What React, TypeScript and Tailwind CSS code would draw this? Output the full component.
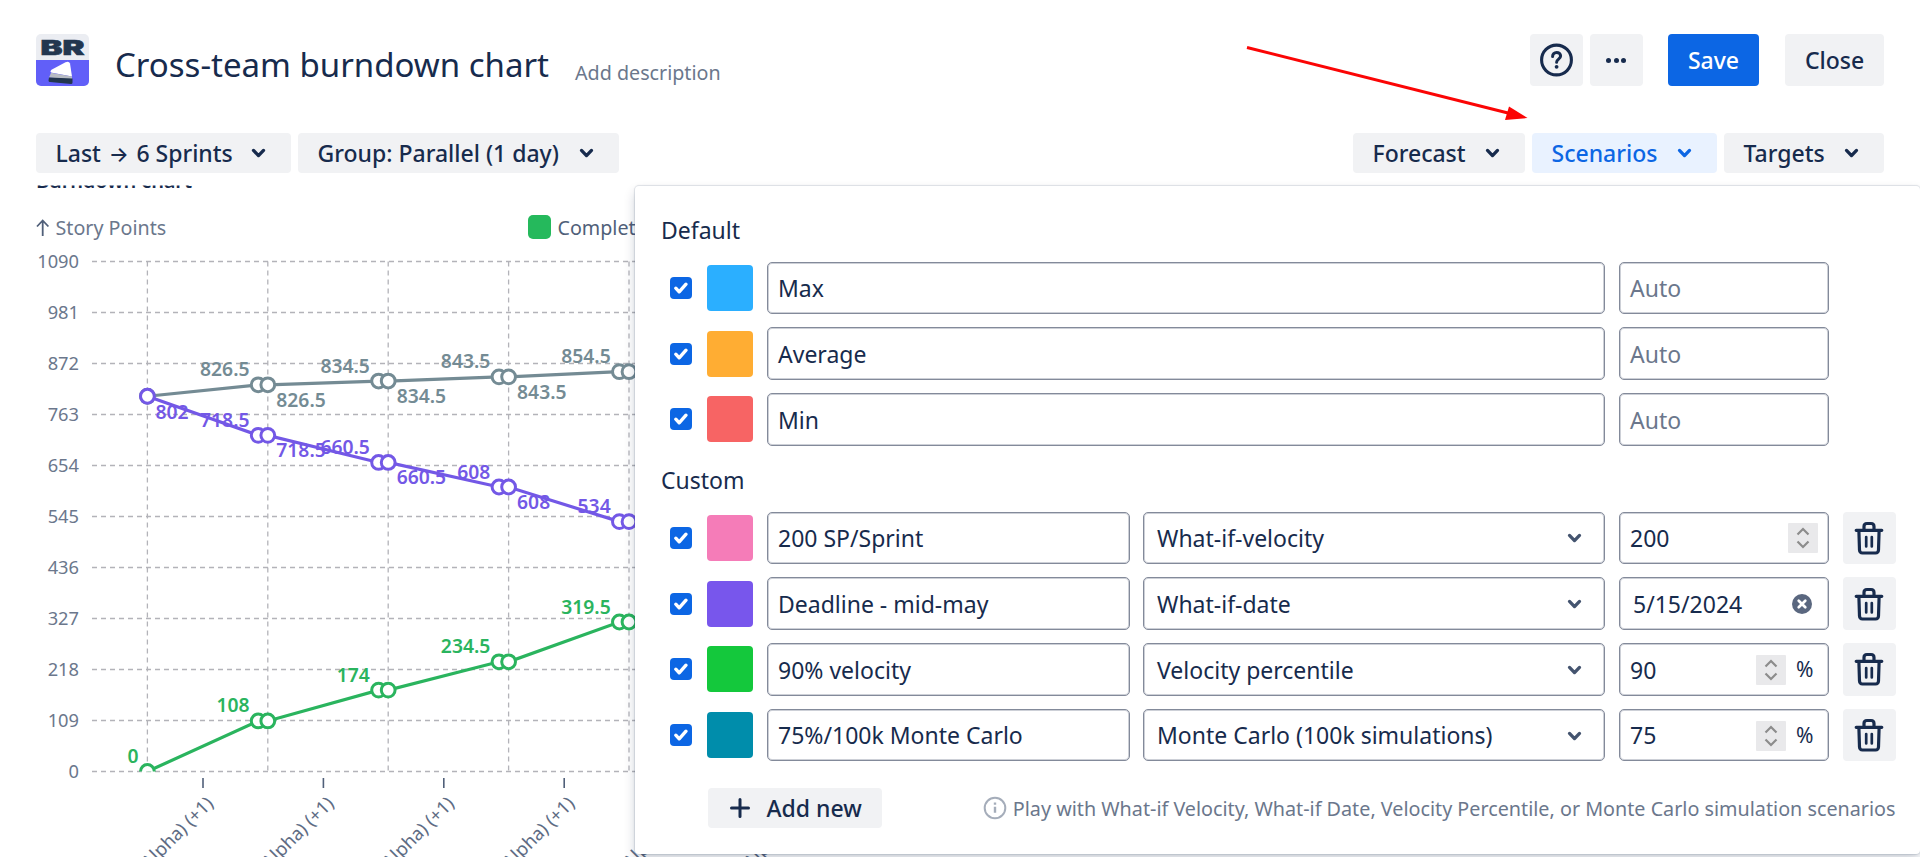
import { type ReactNode } from "react";

interface Scenario {
  name: string;
  color: string;
  type?: string;
  value?: string;
  input?: "number" | "percent" | "date";
}

const DEFAULTS: Scenario[] = [
  { name: "Max", color: "bg-[#2bafff]" },
  { name: "Average", color: "bg-[#ffad33]" },
  { name: "Min", color: "bg-[#f76464]" },
];

const CUSTOM: Scenario[] = [
  { name: "200 SP/Sprint", color: "bg-[#f57cb8]", type: "What-if-velocity", value: "200", input: "number" },
  { name: "Deadline - mid-may", color: "bg-[#7856ec]", type: "What-if-date", value: "5/15/2024", input: "date" },
  { name: "90% velocity", color: "bg-[#14c83c]", type: "Velocity percentile", value: "90", input: "percent" },
  { name: "75%/100k Monte Carlo", color: "bg-[#008dab]", type: "Monte Carlo (100k simulations)", value: "75", input: "percent" },
];

// Chart geometry
const X0 = 147.4;
const STEP = 120.4;
const Y0 = 771.5;
const SCALE = 510 / 1090;
const Y_TICKS = [0, 109, 218, 327, 436, 545, 654, 763, 872, 981, 1090];

const SERIES = [
  { color: "#748b94", start: 802, values: [826.5, 834.5, 843.5, 854.5], below: true, startLabel: false },
  { color: "#7358e6", start: 802, values: [718.5, 660.5, 608, 534], below: true, startLabel: true },
  { color: "#2ab45e", start: 0, values: [108, 174, 234.5, 319.5], below: false, startLabel: true },
];

const yOf = (v: number) => Y0 - v * SCALE;

export default function App() {
  return (
    <div className="relative h-[857px] w-[1920px] overflow-hidden bg-white font-['Noto_Sans',sans-serif] text-[#172b4d]">
      <Chart />
      <div className="relative">
        <Header />
        <Toolbar />
      </div>
      <ScenariosPanel />
      <svg className="absolute left-0 top-0" width="1920" height="140">
        <path d="M1247 47.5L1508 113" stroke="#fb0505" strokeWidth="3" />
        <path d="M1509 106.5L1527.5 118L1505 120Z" fill="#fb0505" />
      </svg>
    </div>
  );
}

function Header() {
  return (
    <header className="flex h-[86px] items-end px-9">
      <Logo />
      <h1 className="ml-[26px] text-[33px] leading-[43px] whitespace-nowrap">Cross-team burndown chart</h1>
      <span className="ml-[26px] text-[19.7px] leading-[26px] text-[#6b778c] whitespace-nowrap">Add description</span>
      <div className="ml-auto flex text-[23px] font-medium">
        <button className="flex h-[52px] w-[53px] items-center justify-center rounded-[4px] bg-[#f1f2f4]">
          <svg width="34" height="34" viewBox="0 0 34 34" fill="none" stroke="#172b4d">
            <circle cx="16.5" cy="17" r="14.9" strokeWidth="3.1" />
            <path d="M12.6 13.4c0-2.4 1.7-4 4-4s4 1.500 4 3.700c0 3-4 3.200-4 6.200" strokeWidth="3" strokeLinecap="round" />
            <circle cx="16.6" cy="23.800" r="1.900" fill="#172b4d" stroke="none" />
          </svg>
        </button>
        <button className="ml-[7px] flex h-[52px] w-[53px] items-center justify-center gap-[2.500px] rounded-[4px] bg-[#f1f2f4] pr-[1px]">
          <i className="size-[5px] rounded-full bg-[#172b4d]" />
          <i className="size-[5px] rounded-full bg-[#172b4d]" />
          <i className="size-[5px] rounded-full bg-[#172b4d]" />
        </button>
        <button className="ml-[25px] h-[52px] w-[91px] rounded-[4px] bg-[#0c66e4] text-white">Save</button>
        <button className="ml-[26px] h-[52px] w-[99px] rounded-[4px] bg-[#f1f2f4]">Close</button>
      </div>
    </header>
  );
}

function Logo() {
  return (
    <svg width="53" height="52" viewBox="0 0 53 52">
      <rect width="53" height="52" rx="5" fill="#ebedf2" />
      <path d="M0 26h53v21a5 5 0 0 1-5 5H5a5 5 0 0 1-5-5z" fill="#615ff8" />
      <text x="4.5" y="20.6" textLength="44" lengthAdjust="spacingAndGlyphs" fontSize="20.5" fontWeight="900" fontFamily="Inter" fill="#22364f" stroke="#22364f" strokeWidth=".6">BR</text>
      <path d="M15 38.500q-1.500-1.200.5-2.700L29.500 28.300q3.500-1.500 4.500 1.200L36 42.500z" fill="#fff" />
      <path d="M15 38.700L36 42.500v3L13 43.500z" fill="#b7bcc4" />
      <path d="M13 43.500L36.500 44.500v4q0 1.500-1.500 1.500L14 48q-1.500 0-1.500-1.500z" fill="#22364f" />
    </svg>
  );
}

function Toolbar() {
  return (
    <div className="mt-[47px] flex h-10 px-9 text-[23px] font-medium">
      <Dropdown className="w-[255px]">
        <span>
          Last <span className="inline-block w-[23.500px] text-center font-['Inter'] text-[21px] leading-none">→</span> 6 Sprints
        </span>
      </Dropdown>
      <Dropdown className="ml-[7px] w-[321px]">Group: Parallel (1 day)</Dropdown>
      <Dropdown className="ml-auto w-[172px]">Forecast</Dropdown>
      <Dropdown className="ml-[7px] w-[185px]" active>Scenarios</Dropdown>
      <Dropdown className="ml-[7px] w-[160px]">Targets</Dropdown>
    </div>
  );
}

function Dropdown({ children, className, active }: { children: ReactNode; className: string; active?: boolean }) {
  return (
    <button
      className={`flex h-10 items-center justify-between rounded-[4px] pl-[19.500px] pr-[25px] whitespace-nowrap ${
        active ? "bg-[#e9f2ff] text-[#0c66e4]" : "bg-[#f1f2f4]"
      } ${className}`}
    >
      {children}
      <Chevron />
    </button>
  );
}

function Chevron() {
  return (
    <svg width="15" height="10" viewBox="0 0 15 10" fill="none" stroke="currentColor" strokeWidth="3.300" strokeLinecap="round" strokeLinejoin="round">
      <path d="M2.500 2.400l5 5.200 5-5.200" />
    </svg>
  );
}

function Chart() {
  return (
    <svg className="absolute left-0 top-0" width="1920" height="857">
      <defs>
        <clipPath id="plot">
          <rect x="90" y="240" width="1800" height="531.5" />
        </clipPath>
        <clipPath id="body">
          <rect x="0" y="185.500" width="1920" height="672" />
        </clipPath>
      </defs>

      <text x="36" y="187.700" fontSize="20" fontWeight="600" textLength="156" fill="#172b4d" clipPath="url(#body)">Burndown chart</text>
      <path d="M42.700 236V221M37 226.500L42.700 220.500L48.400 226.500" fill="none" stroke="#505f79" strokeWidth="1.800" />
      <text x="55.500" y="235" fontSize="19.700" fill="#6b778c">Story Points</text>
      <rect x="528" y="215" width="23" height="24" rx="5" fill="#25b95c" />
      <text x="557.500" y="235" fontSize="19.700" fill="#505f79">Completed</text>

      {/* Grid */}
      <g stroke="#b3b3b9" strokeWidth="1.300" strokeDasharray="5 4">
        {Y_TICKS.map((t) => (
          <path key={t} d={`M92 ${yOf(t)}H1900`} />
        ))}
        {[0, 1, 2, 3, 4].map((i) => (
          <path key={i} d={`M${X0 + i * STEP} 261.500V${Y0}`} />
        ))}
      </g>
      {Y_TICKS.map((t) => (
        <text key={t} x="79" y={yOf(t) + 6.500} fontSize="18.300" textAnchor="end" fill="#6b778c">{t}</text>
      ))}

      {/* Sprint labels */}
      {[0, 1, 2, 3, 4, 5].map((i) => {
        const x = 203 + i * STEP;
        return (
          <g key={i}>
            <path d={`M${x} 778V788`} stroke="#505f79" strokeWidth="1.600" />
            <text transform={`translate(${x + 11.500} 804.500) rotate(-45)`} fontSize="18.500" textAnchor="end" fill="#5e6c84">(Alpha) (+1)</text>
          </g>
        );
      })}

      {SERIES.map((s) => {
        const points = [{ x: X0, v: s.start }];
        s.values.forEach((v, i) => {
          const x = X0 + (i + 1) * STEP;
          points.push({ x: x - 9.600, v }, { x, v });
        });
        return (
          <g key={s.color}>
            <g clipPath="url(#plot)" stroke={s.color}>
              <polyline points={points.map((p) => `${p.x},${yOf(p.v)}`).join(" ")} fill="none" strokeWidth="3.200" />
              {points.map((p) => (
                <circle key={p.x} cx={p.x} cy={yOf(p.v)} r="6.900" fill="#fff" strokeWidth="3" />
              ))}
            </g>
            <g fill={s.color} fontSize="19.300" fontWeight="600">
              {s.startLabel && (
                s.start === 0
                  ? <text x="138.500" y={yOf(0) - 8.500} textAnchor="end">0</text>
                  : <text x="155.500" y={yOf(s.start) + 22.500}>{s.start}</text>
              )}
              {s.values.map((v, i) => (
                <text key={i} x={X0 + (i + 1) * STEP - 18.300} y={yOf(v) - 8.500} textAnchor="end">{v}</text>
              ))}
              {s.below && s.values.slice(0, 3).map((v, i) => (
                <text key={i} x={X0 + (i + 1) * STEP + 8.500} y={yOf(v) + 22}>{v}</text>
              ))}
            </g>
          </g>
        );
      })}
    </svg>
  );
}

function ScenariosPanel() {
  return (
    <section className="absolute left-[635px] top-[186px] h-[668px] w-[1285px] rounded-[4px] bg-white pl-[26px] text-[23px] shadow-[0_0_1px_1px_rgba(9,30,66,0.12),0_6px_12px_rgba(9,30,66,0.2)]">
      <h2 className="pt-[29px] leading-[30px]">Default</h2>
      <div className="mt-[16.500px] flex flex-col gap-[13.300px]">
        {DEFAULTS.map((s) => (
          <ScenarioRow key={s.name} scenario={s} />
        ))}
      </div>
      <h2 className="mt-[19px] leading-[30px]">Custom</h2>
      <div className="mt-[17px] flex flex-col gap-[13.300px]">
        {CUSTOM.map((s) => (
          <ScenarioRow key={s.name} scenario={s} />
        ))}
      </div>
      <div className="mt-[26.500px] flex h-10 items-center pl-[46.500px] pr-[24.500px]">
        <button className="flex h-10 w-[174px] items-center rounded-[4px] bg-[#f1f2f4] pl-[22px] font-medium">
          <svg width="20" height="20" viewBox="0 0 20 20" stroke="#172b4d" strokeWidth="3" strokeLinecap="round">
            <path d="M10 1.500v17M1.500 10h17" />
          </svg>
          <span className="ml-[17px]">Add new</span>
        </button>
        <svg className="ml-auto" width="24" height="24" viewBox="0 0 24 24" fill="none" stroke="#a5adba" strokeWidth="2">
          <circle cx="12" cy="12" r="10.300" />
          <path d="M12 10.800v6M12 6.500v2.300" strokeWidth="2.400" />
        </svg>
        <span className="ml-[6px] pt-px text-[19.750px] text-[#6b778c] whitespace-nowrap">
          Play with What-if Velocity, What-if Date, Velocity Percentile, or Monte Carlo simulation scenarios
        </span>
      </div>
    </section>
  );
}

function ScenarioRow({ scenario }: { scenario: Scenario }) {
  return (
    <div className="flex h-[52.500px] items-center pl-[9px] whitespace-nowrap">
      <span className="flex size-[22px] items-center justify-center rounded-[4px] bg-[#0c66e4]">
        <svg width="16" height="14" viewBox="0 0 16 14" fill="none" stroke="#fff" strokeWidth="3.400" strokeLinecap="round" strokeLinejoin="round">
          <path d="M2.800 7.200l3.400 3.600L13 3.200" />
        </svg>
      </span>
      <span className={`ml-[15px] size-[46px] rounded-[4px] ${scenario.color}`} />
      {scenario.type ? (
        <>
          <Field className="ml-[14px] w-[362.500px] pl-[10px]">{scenario.name}</Field>
          <Field className="ml-[13.500px] w-[462px] pl-[13px]">
            {scenario.type}
            <span className="ml-auto mr-[12px] flex text-[#44546f]">
              <Chevron />
            </span>
          </Field>
          <Field className="ml-[14px] w-[210px] pl-[10px]">
            <span className={scenario.input === "date" ? "ml-[3px]" : ""}>{scenario.value}</span>
            {scenario.input === "date" && <ClearIcon />}
            {scenario.input === "number" && <Stepper />}
            {scenario.input === "percent" && (
              <>
                <Stepper />
                <span className="ml-[10px] mr-[4.500px] text-[21px]">%</span>
              </>
            )}
          </Field>
          <button className="ml-[13.500px] flex h-[52.500px] w-[53px] items-center justify-center rounded-[4px] bg-[#f1f2f4]">
            <TrashIcon />
          </button>
        </>
      ) : (
        <>
          <Field className="ml-[14px] w-[838px] pl-[10px]">{scenario.name}</Field>
          <Field className="ml-[14px] w-[210px] pl-[10px] text-[#6b778c]">Auto</Field>
        </>
      )}
    </div>
  );
}

function Field({ children, className }: { children: ReactNode; className: string }) {
  return (
    <div className={`flex h-[52.500px] items-center rounded-[5px] border border-[#838a9a] bg-white pr-[10px] pt-px shadow-[inset_0_0_0_1px_rgba(131,138,154,0.4)] ${className}`}>
      {children}
    </div>
  );
}

function Stepper() {
  return (
    <svg className="ml-auto" width="30" height="30" viewBox="0 0 30 30" fill="none" stroke="#8c8c8c" strokeWidth="2.200">
      <rect width="30" height="30" rx="1" fill="#e9e9eb" stroke="none" />
      <path d="M9.500 11.500L15 6l5.500 5.500M9.500 18.500L15 24l5.500-5.500" />
    </svg>
  );
}

function ClearIcon() {
  return (
    <svg className="ml-auto mr-[6px]" width="20" height="20" viewBox="0 0 20 20">
      <circle cx="10" cy="10" r="10" fill="#5a677f" />
      <path d="M6.700 6.700l6.600 6.600M13.300 6.700l-6.600 6.600" stroke="#fff" strokeWidth="2.700" strokeLinecap="round" />
    </svg>
  );
}

function TrashIcon() {
  return (
    <svg width="30" height="34" viewBox="0 0 30 34" fill="none" stroke="#172b4d" strokeWidth="3.200" strokeLinecap="round" strokeLinejoin="round">
      <path d="M2.200 9.300h25.600M10 8.500V5.500q0-3 3-3h4q3 0 3 3v3" />
      <path d="M4.900 10l.6 19q.2 3 3 3h13q2.800 0 3-3l.6-19" />
      <path d="M12.200 16v9.500M17.800 16v9.500" strokeWidth="2.700" />
    </svg>
  );
}
